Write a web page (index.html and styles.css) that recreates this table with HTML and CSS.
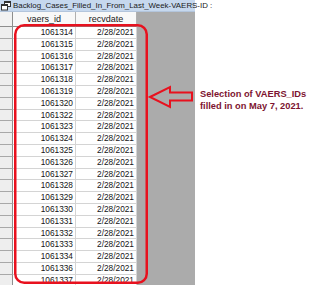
FILE: index.html
```html
<!DOCTYPE html>
<html>
<head>
<meta charset="utf-8">
<link rel="stylesheet" href="styles.css">
</head>
<body>
<div class="page">
  <div class="panel">
    <div class="titlebar">
      <svg class="ticon" width="10" height="10" viewBox="0 0 10 10">
        <rect x="3.5" y="0.5" width="6" height="5" fill="#fff" stroke="#333" stroke-width="1"/>
        <rect x="3.5" y="0.5" width="6" height="1.5" fill="#333"/>
        <rect x="0.5" y="3.5" width="6" height="5.5" fill="#fff" stroke="#333" stroke-width="1"/>
        <rect x="0.5" y="3.5" width="6" height="1.5" fill="#333"/>
      </svg>
      <span class="ttext">Backlog_Cases_Filled_In_From_Last_Week-VAERS-ID :</span>
    </div>
    <div class="body">
      <div class="sheet">
        <div class="sel hdr"></div><div class="colh">vaers_id</div><div class="colh">recvdate</div>
        <div class="sel"></div><div class="cell">1061314</div><div class="cell">2/28/2021</div>
        <div class="sel"></div><div class="cell">1061315</div><div class="cell">2/28/2021</div>
        <div class="sel"></div><div class="cell">1061316</div><div class="cell">2/28/2021</div>
        <div class="sel"></div><div class="cell">1061317</div><div class="cell">2/28/2021</div>
        <div class="sel"></div><div class="cell">1061318</div><div class="cell">2/28/2021</div>
        <div class="sel"></div><div class="cell">1061319</div><div class="cell">2/28/2021</div>
        <div class="sel"></div><div class="cell">1061320</div><div class="cell">2/28/2021</div>
        <div class="sel"></div><div class="cell">1061322</div><div class="cell">2/28/2021</div>
        <div class="sel"></div><div class="cell">1061323</div><div class="cell">2/28/2021</div>
        <div class="sel"></div><div class="cell">1061324</div><div class="cell">2/28/2021</div>
        <div class="sel"></div><div class="cell">1061325</div><div class="cell">2/28/2021</div>
        <div class="sel"></div><div class="cell">1061326</div><div class="cell">2/28/2021</div>
        <div class="sel"></div><div class="cell">1061327</div><div class="cell">2/28/2021</div>
        <div class="sel"></div><div class="cell">1061328</div><div class="cell">2/28/2021</div>
        <div class="sel"></div><div class="cell">1061329</div><div class="cell">2/28/2021</div>
        <div class="sel"></div><div class="cell">1061330</div><div class="cell">2/28/2021</div>
        <div class="sel"></div><div class="cell">1061331</div><div class="cell">2/28/2021</div>
        <div class="sel"></div><div class="cell">1061332</div><div class="cell">2/28/2021</div>
        <div class="sel"></div><div class="cell">1061333</div><div class="cell">2/28/2021</div>
        <div class="sel"></div><div class="cell">1061334</div><div class="cell">2/28/2021</div>
        <div class="sel"></div><div class="cell">1061336</div><div class="cell">2/28/2021</div>
        <div class="sel"></div><div class="cell">1061337</div><div class="cell">2/28/2021</div>
      </div>
    </div>
  </div>
  <svg class="overlay" width="318" height="285" viewBox="0 0 318 285">
    <rect x="15.25" y="25.25" width="131.5" height="257.5" rx="9" ry="9" fill="none" stroke="#e8111e" stroke-width="2.5"/>
    <polygon points="150,97 170,87 170,92.5 192,92.5 192,100.5 170,100.5 170,107" fill="none" stroke="#e8111e" stroke-width="2" stroke-linejoin="miter"/>
  </svg>
  <div class="note">Selection of VAERS_IDs<br>filled in on May 7, 2021.</div>
</div>
</body>
</html>
```
FILE: styles.css
```css
html, body {
  margin: 0;
  padding: 0;
  background: #ffffff;
}
.page {
  position: relative;
  width: 318px;
  height: 285px;
  overflow: hidden;
  font-family: "Liberation Sans", Arial, sans-serif;
}
.panel {
  width: 195px;
  height: 285px;
  display: flex;
  flex-direction: column;
  background: #ababab;
}
.titlebar {
  flex: none;
  height: 12px;
  background: #c6d8ee;
  display: flex;
  align-items: center;
  gap: 2px;
  padding-left: 1px;
  box-sizing: border-box;
  border-bottom: 1px solid #b3c5dc;
}
.ticon {
  flex: none;
}
.ttext {
  font-size: 7.9px;
  color: #1a1a1a;
  white-space: nowrap;
}
.body {
  flex: 1;
  display: flex;
  overflow: hidden;
}
.sheet {
  display: grid;
  grid-template-columns: 13px 63px 61px;
  grid-template-rows: 15px;
  grid-auto-rows: 11.8px;
  background: #ffffff;
  align-self: flex-start;
}
.sel {
  background: #eeeeee;
  border-right: 1px solid #8e8e8e;
  border-bottom: 1px solid #a8a8a8;
  box-sizing: border-box;
}
.sel.hdr {
  background: #f2f2f2;
  border-bottom: 1px solid #8e8e8e;
}
.colh {
  background: #f8f8f8;
  border-right: 1px solid #b0b0b0;
  border-bottom: 1px solid #8e8e8e;
  box-sizing: border-box;
  font-size: 9px;
  color: #1a1a1a;
  text-align: center;
  line-height: 13px;
  padding-top: 1px;
}
.cell {
  border-right: 1px solid #d4d4d4;
  border-bottom: 1px solid #d4d4d4;
  box-sizing: border-box;
  font-size: 8.3px;
  color: #141414;
  text-align: right;
  padding-right: 2px;
  line-height: 11px;
  overflow: hidden;
  white-space: nowrap;
}
.overlay {
  position: absolute;
  left: 0;
  top: 0;
  pointer-events: none;
}
.note {
  position: absolute;
  left: 200px;
  top: 88px;
  font-size: 9.3px;
  font-weight: bold;
  line-height: 12px;
  color: #7d1430;
  white-space: nowrap;
}
```
